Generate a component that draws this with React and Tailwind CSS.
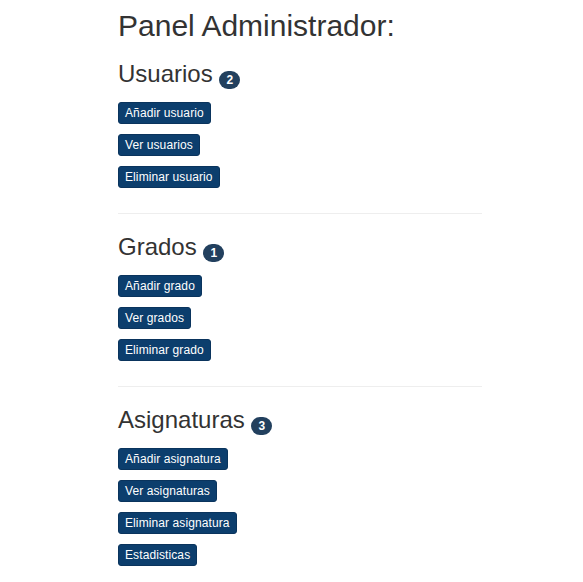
const sections = [
  {
    title: 'Usuarios',
    count: 2,
    actions: ['Añadir usuario', 'Ver usuarios', 'Eliminar usuario'],
  },
  {
    title: 'Grados',
    count: 1,
    actions: ['Añadir grado', 'Ver grados', 'Eliminar grado'],
  },
  {
    title: 'Asignaturas',
    count: 3,
    actions: ['Añadir asignatura', 'Ver asignaturas', 'Eliminar asignatura', 'Estadisticas'],
  },
];

const Section = ({ section, last }) => (
  <div>
    <h3 className="pt-[2px] text-[24px] leading-[26px] text-[#333333] font-normal">
      {section.title}{' '}
      <span className="inline-block align-middle relative top-[4px] rounded-full bg-[#22405e] text-white text-[12px] font-bold leading-none px-[7px] py-[3px]">
        {section.count}
      </span>
    </h3>
    <div className="mt-[15px] flex flex-col items-start gap-[10px]">
      {section.actions.map((action) => (
        <button
          key={action}
          className="h-[22px] px-[6px] rounded-[3px] bg-[#0c3e6d] border border-[#0a345d] text-white text-[12px] leading-[18px] tracking-[0.1px]"
        >
          {action}
        </button>
      ))}
    </div>
    {!last && <hr className="mt-[25px] mb-[18px] border-t border-[#eeeeee]" />}
  </div>
);

const App = () => {
  return (
    <div className="min-h-screen bg-white font-['Liberation_Sans',Arial,sans-serif]">
      <div className="ml-[118px] w-[364px]">
        <h2 className="pt-[9px] text-[30px] leading-[33px] text-[#333333] font-normal">
          Panel Administrador:
        </h2>
        <div className="mt-[17px]">
          {sections.map((section, idx) => (
            <Section key={section.title} section={section} last={idx === sections.length - 1} />
          ))}
        </div>
      </div>
    </div>
  );
};

export default App;
